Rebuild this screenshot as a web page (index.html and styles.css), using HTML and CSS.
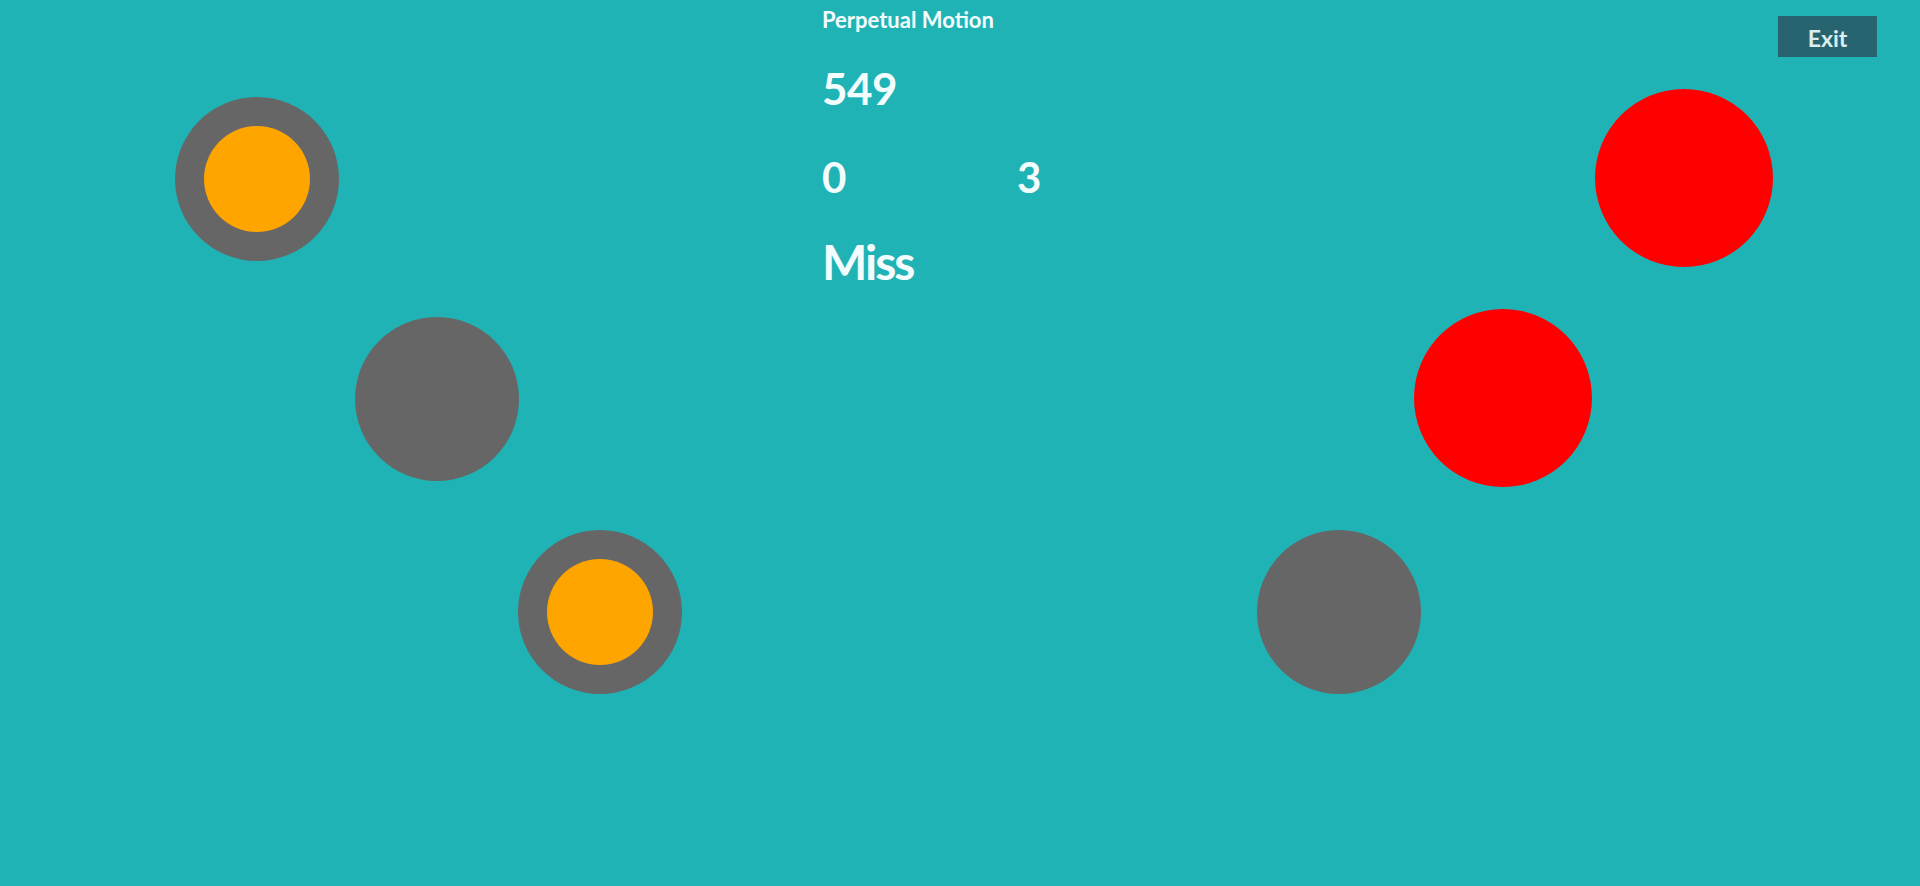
FILE: index.html
```html
<!DOCTYPE html>
<html>
<head>
<meta charset="utf-8">
<link rel="stylesheet" href="styles.css">
</head>
<body>
<div class="stage">
  <div class="hud">
    <div class="title">Perpetual Motion</div>
    <div class="score">549</div>
    <div class="counts"><span class="count-left">0</span><span>3</span></div>
    <div class="status">Miss</div>
  </div>
  <button class="exit">Exit</button>

  <div class="dot ring" style="left:175px; top:97px;"><div class="core"></div></div>
  <div class="dot gray" style="left:355px; top:317px;"></div>
  <div class="dot ring" style="left:518px; top:530px;"><div class="core"></div></div>

  <div class="dot red" style="left:1595px; top:89px;"></div>
  <div class="dot red" style="left:1414px; top:309px;"></div>
  <div class="dot gray" style="left:1257px; top:530px;"></div>
</div>
</body>
</html>
```

FILE: styles.css
```css
html, body {
  margin: 0;
  padding: 0;
  width: 100%;
  height: 100%;
  overflow: hidden;
}
body {
  background: #20b3b6;
  font-family: Lato, "Open Sans", sans-serif;
  color: #f4fdfd;
}
.stage {
  position: relative;
  width: 1920px;
  height: 886px;
}
.hud {
  padding-left: 822px;
  padding-top: 7px;
  display: flex;
  flex-direction: column;
}
.title {
  font-size: 22px;
  font-weight: 700;
  line-height: 26px;
  letter-spacing: 0px;
}
.score {
  margin-top: 29px;
  font-size: 44px;
  font-weight: 700;
  line-height: 53px;
  letter-spacing: -0.5px;
}
.counts {
  margin-top: 37px;
  font-size: 42px;
  font-weight: 700;
  line-height: 50px;
  display: flex;
}
.count-left {
  width: 195px;
}
.status {
  margin-top: 31px;
  font-size: 48px;
  font-weight: 700;
  line-height: 58px;
  letter-spacing: -2px;
}
.exit {
  position: absolute;
  left: 1778px;
  top: 16px;
  width: 99px;
  height: 41px;
  border: none;
  padding: 2px 0 0;
  background: #28646f;
  color: #d9eeee;
  font-family: Lato, "Open Sans", sans-serif;
  font-size: 23px;
  font-weight: 700;
}
.dot {
  position: absolute;
  width: 164px;
  height: 164px;
  border-radius: 50%;
  background: #666666;
  display: flex;
  align-items: center;
  justify-content: center;
}
.dot.red {
  width: 178px;
  height: 178px;
  background: #ff0000;
}
.core {
  width: 106px;
  height: 106px;
  border-radius: 50%;
  background: #ffa500;
}
```
